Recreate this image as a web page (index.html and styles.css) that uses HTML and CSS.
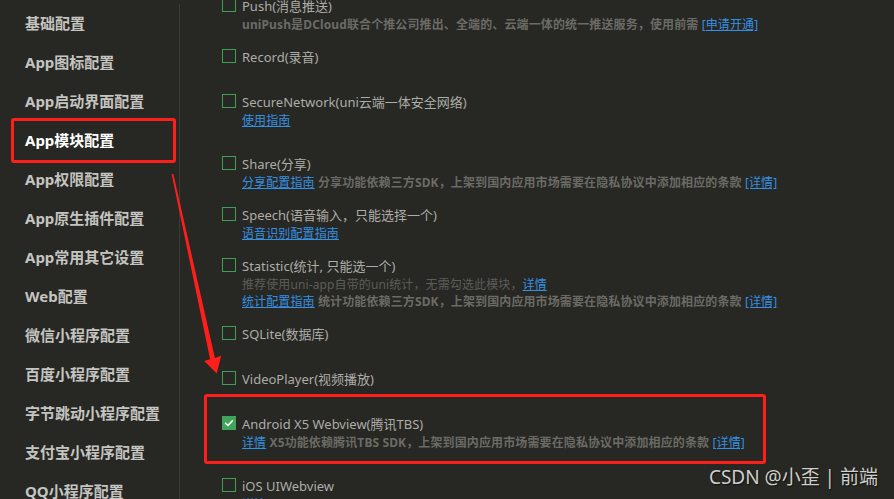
FILE: index.html
```html
<!DOCTYPE html>
<html lang="zh-CN">
<head>
<meta charset="utf-8">
<title>App模块配置</title>
<link rel="stylesheet" href="styles.css">
</head>
<body>
<div class="app">
  <nav class="sidebar">
    <div class="nav-item">基础配置</div>
    <div class="nav-item">App图标配置</div>
    <div class="nav-item">App启动界面配置</div>
    <div class="nav-item nav-item-active">App模块配置</div>
    <div class="nav-item">App权限配置</div>
    <div class="nav-item">App原生插件配置</div>
    <div class="nav-item">App常用其它设置</div>
    <div class="nav-item">Web配置</div>
    <div class="nav-item">微信小程序配置</div>
    <div class="nav-item">百度小程序配置</div>
    <div class="nav-item">字节跳动小程序配置</div>
    <div class="nav-item">支付宝小程序配置</div>
    <div class="nav-item">QQ小程序配置</div>
  </nav>
  <main class="main">
    <div class="module-list">
      <div class="module">
        <div class="module-label"><span class="checkbox"></span>Push(消息推送)</div>
        <div class="module-desc">uniPush是DCloud联合个推公司推出、全端的、云端一体的统一推送服务，使用前需 <a class="link">[申请开通]</a></div>
      </div>
      <div class="module">
        <div class="module-label"><span class="checkbox"></span>Record(录音)</div>
      </div>
      <div class="module module-loose">
        <div class="module-label"><span class="checkbox"></span>SecureNetwork(uni云端一体安全网络)</div>
        <div class="module-desc"><a class="link">使用指南</a></div>
      </div>
      <div class="module module-loose">
        <div class="module-label"><span class="checkbox"></span>Share(分享)</div>
        <div class="module-desc"><a class="link">分享配置指南</a> 分享功能依赖三方SDK，上架到国内应用市场需要在隐私协议中添加相应的条款 <a class="link">[详情]</a></div>
      </div>
      <div class="module">
        <div class="module-label"><span class="checkbox"></span>Speech(语音输入，只能选择一个)</div>
        <div class="module-desc"><a class="link">语音识别配置指南</a></div>
      </div>
      <div class="module">
        <div class="module-label"><span class="checkbox"></span>Statistic(统计, 只能选一个)</div>
        <div class="module-desc module-desc-light">推荐使用uni-app自带的uni统计，无需勾选此模块，<a class="link">详情</a></div>
        <div class="module-desc"><a class="link">统计配置指南</a> 统计功能依赖三方SDK，上架到国内应用市场需要在隐私协议中添加相应的条款 <a class="link">[详情]</a></div>
      </div>
      <div class="module">
        <div class="module-label"><span class="checkbox"></span>SQLite(数据库)</div>
      </div>
      <div class="module module-loose">
        <div class="module-label"><span class="checkbox"></span>VideoPlayer(视频播放)</div>
      </div>
      <div class="module module-loose module-highlight">
        <div class="module-label"><span class="checkbox checkbox-checked"><svg viewBox="0 0 14 14" width="14" height="14"><polyline points="3.6,7.3 6,9.5 10.4,4.8" fill="none" stroke="#ffffff" stroke-width="1.6" stroke-linecap="round" stroke-linejoin="round"/></svg></span>Android X5 Webview(腾讯TBS)</div>
        <div class="module-desc"><a class="link">详情</a> X5功能依赖腾讯TBS SDK，上架到国内应用市场需要在隐私协议中添加相应的条款 <a class="link">[详情]</a></div>
      </div>
      <div class="module module-loose">
        <div class="module-label"><span class="checkbox"></span>iOS UIWebview</div>
        <div class="module-desc"><a class="link">详情</a></div>
      </div>
    </div>
  </main>
</div>
<svg class="arrow" width="894" height="499" viewBox="0 0 894 499">
  <polygon points="171.6,174 173.4,174 214.9,358 221.2,355.8 216.7,373.5 204.2,361 210.1,359.2" fill="#ff1f1a"/>
</svg>
<div class="watermark">CSDN @小歪 | 前端</div>
</body>
</html>
```
FILE: styles.css
```css
html, body {
  margin: 0;
  padding: 0;
}
body {
  width: 894px;
  height: 499px;
  overflow: hidden;
  background: #272723;
  font-family: "Noto Sans", "Noto Sans CJK SC", sans-serif;
  position: relative;
}
.app {
  display: flex;
  height: 499px;
}
.sidebar {
  width: 180px;
  flex: 0 0 180px;
  margin-top: 4px;
  border-right: 1px solid #3b3b36;
  box-sizing: border-box;
}
.nav-item {
  position: relative;
  height: 39px;
  line-height: 39px;
  padding-left: 25px;
  font-size: 15px;
  font-weight: 700;
  color: #c4c4c0;
  white-space: nowrap;
}
.nav-item-active {
  color: #ffffff;
}
.nav-item-active::after {
  content: "";
  position: absolute;
  left: 11px;
  top: -3px;
  width: 165px;
  height: 45px;
  box-sizing: border-box;
  border: 3px solid #ff1f1a;
  border-radius: 3px;
}
.main {
  flex: 1;
  padding-left: 42px;
  min-width: 0;
}
.module-list {
  display: flex;
  flex-direction: column;
  margin-top: -3.5px;
}
.module {
  position: relative;
  margin-bottom: 15px;
}
.module-loose {
  margin-top: 11px;
}
.module-label {
  display: flex;
  align-items: flex-start;
  height: 19px;
  line-height: 19px;
  font-size: 13px;
  color: #adada8;
  white-space: nowrap;
}
.checkbox {
  flex: 0 0 auto;
  width: 14px;
  height: 14px;
  box-sizing: border-box;
  border: 1px solid #3f9e58;
  margin-top: 1px;
  margin-right: 6px;
  display: flex;
}
.checkbox-checked {
  background: #3fa55b;
  border-color: #3fa55b;
}
.checkbox-checked svg {
  margin: -1px;
}
.module-desc {
  padding-left: 20px;
  height: 17px;
  line-height: 17px;
  font-size: 12px;
  font-weight: 700;
  letter-spacing: 0.12px;
  color: #6b6b66;
  white-space: nowrap;
}
.module-desc-light {
  font-weight: 400;
  color: #5d5d58;
}
.link {
  color: #3590e2;
  text-decoration: underline;
  font-weight: 400;
}
.module-highlight::after {
  content: "";
  position: absolute;
  left: -18px;
  top: -20.5px;
  width: 562px;
  height: 70px;
  box-sizing: border-box;
  border: 3px solid #ff1f1a;
  border-radius: 3px;
}
.arrow {
  position: absolute;
  left: 0;
  top: 0;
  pointer-events: none;
}
.watermark {
  position: absolute;
  right: 16px;
  bottom: 10px;
  font-size: 19px;
  line-height: 24px;
  color: #cfcfcb;
  text-shadow: 1px 1px 1px #111110;
  white-space: nowrap;
}
```
